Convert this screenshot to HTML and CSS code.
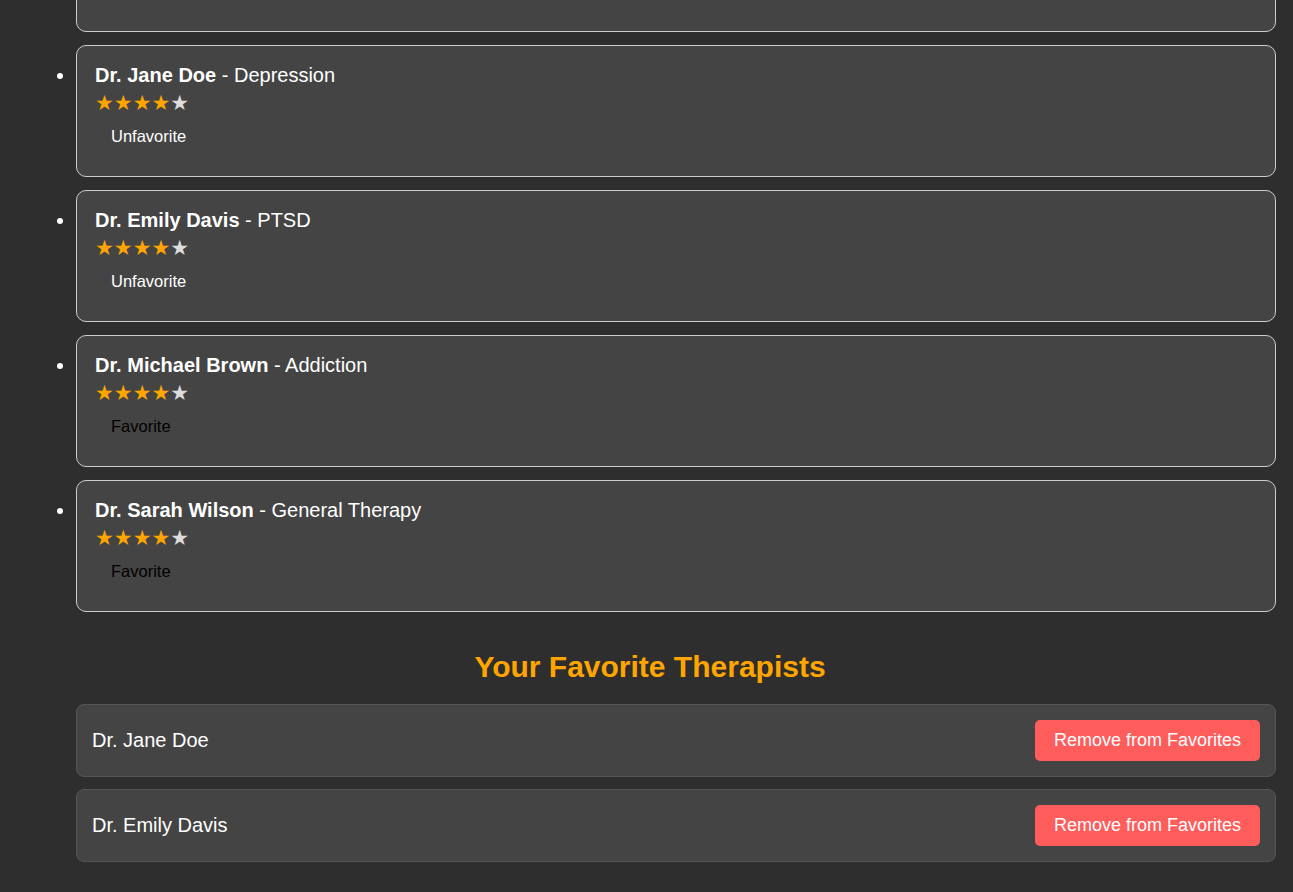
FILE: index.html
```html
<!DOCTYPE html>
<html lang="en">
<head>
<meta charset="utf-8">
<title>Therapists</title>
<link rel="stylesheet" href="styles.css">
</head>
<body>
<div class="container">
  <ul class="therapist-list">
    <li class="card">
      <div class="name"><strong>Dr. John Smith</strong> - Anxiety</div>
      <div class="stars"><span class="on">★★★★</span><span class="off">★</span></div>
      <button class="fav-btn">Favorite</button>
    </li>
    <li class="card">
      <div class="name"><strong>Dr. Jane Doe</strong> - Depression</div>
      <div class="stars"><span class="on">★★★★</span><span class="off">★</span></div>
      <button class="fav-btn is-fav">Unfavorite</button>
    </li>
    <li class="card">
      <div class="name"><strong>Dr. Emily Davis</strong> - PTSD</div>
      <div class="stars"><span class="on">★★★★</span><span class="off">★</span></div>
      <button class="fav-btn is-fav">Unfavorite</button>
    </li>
    <li class="card">
      <div class="name"><strong>Dr. Michael Brown</strong> - Addiction</div>
      <div class="stars"><span class="on">★★★★</span><span class="off">★</span></div>
      <button class="fav-btn">Favorite</button>
    </li>
    <li class="card">
      <div class="name"><strong>Dr. Sarah Wilson</strong> - General Therapy</div>
      <div class="stars"><span class="on">★★★★</span><span class="off">★</span></div>
      <button class="fav-btn">Favorite</button>
    </li>
  </ul>

  <section class="favorites">
    <h2 class="favorites-title">Your Favorite Therapists</h2>
    <ul class="favorites-list">
      <li class="fav-item">
        <span class="fav-name">Dr. Jane Doe</span>
        <button class="remove-btn">Remove from Favorites</button>
      </li>
      <li class="fav-item">
        <span class="fav-name">Dr. Emily Davis</span>
        <button class="remove-btn">Remove from Favorites</button>
      </li>
    </ul>
  </section>
</div>
</body>
</html>
```

FILE: styles.css
```css
html, body {
  margin: 0;
  padding: 0;
}

body {
  background: #2e2e2e;
  color: #ffffff;
  font-family: "Liberation Sans", Arial, sans-serif;
  overflow: hidden;
}

.container {
  padding: 0 17px 0 36px;
}

.therapist-list {
  list-style: disc;
  margin: -100px 0 0 0;
  padding: 0 0 0 40px;
}

.card {
  background: #444444;
  border: 1px solid #cccccc;
  border-radius: 10px;
  padding: 18px 18px 20px;
  margin-bottom: 13px;
  box-sizing: border-box;
  height: 132px;
}

.card::marker {
  font-size: 20px;
}

.name {
  font-size: 20px;
}

.name strong {
  font-weight: bold;
}

.stars {
  font-size: 21px;
  margin: 5px 0 2px;
  font-family: "DejaVu Sans", sans-serif;
  line-height: 23px;
}

.stars .on {
  color: #ffa500;
}

.stars .off {
  color: #dddddd;
}

.fav-btn {
  display: block;
  background: transparent;
  border: none;
  padding: 10px 15px 10px 16px;
  font-family: "Liberation Sans", Arial, sans-serif;
  font-size: 16.5px;
  color: #000000;
}

.fav-btn.is-fav {
  color: #ffffff;
}

.favorites {
  margin-top: 38px;
}

.favorites-title {
  text-align: center;
  color: #ffa500;
  font-size: 30px;
  font-weight: bold;
  margin: 0 0 20px;
  padding: 0 12px 0 0;
}

.favorites-list {
  list-style: none;
  margin: 0;
  padding: 0 0 0 40px;
}

.fav-item {
  display: flex;
  justify-content: space-between;
  align-items: center;
  background: #444444;
  border: 1px solid #555555;
  border-radius: 8px;
  padding: 15px;
  margin-bottom: 12px;
}

.fav-name {
  font-size: 20px;
  color: #ffffff;
}

.remove-btn {
  background: #ff5c5c;
  color: #ffffff;
  border: none;
  border-radius: 5px;
  padding: 10px 19px;
  font-family: "Liberation Sans", Arial, sans-serif;
  font-size: 18px;
  line-height: 21px;
}
```
